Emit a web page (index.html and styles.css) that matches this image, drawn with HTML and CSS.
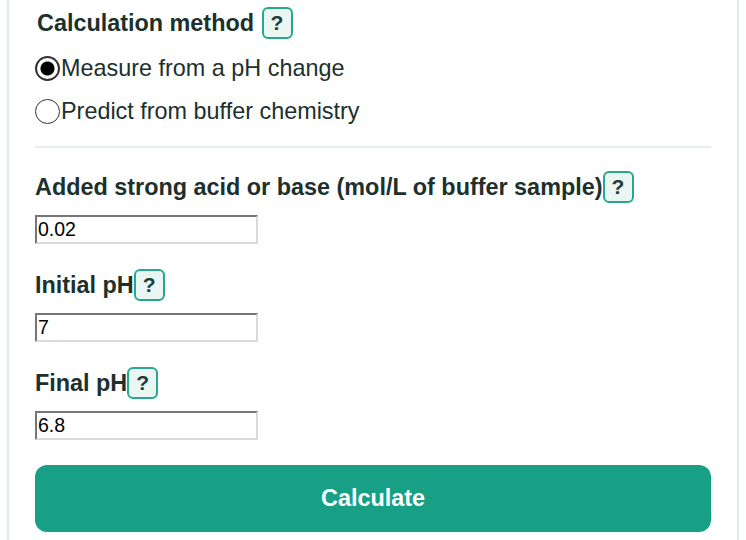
FILE: index.html
```html
<!DOCTYPE html>
<html lang="en">
<head>
  <meta charset="UTF-8" />
  <meta name="viewport" content="width=device-width, initial-scale=1.0" />
  <title>Buffer Capacity Calculator</title>
  <link rel="stylesheet" href="styles.css">
</head>
<body>
  <form class="card" onsubmit="return false;">
    <div class="field-label heading">Calculation method <button type="button" class="help">?</button></div>

    <div class="radio-group">
      <label class="radio-row">
        <input type="radio" name="method" value="measure" checked>
        <span>Measure from a pH change</span>
      </label>
      <label class="radio-row">
        <input type="radio" name="method" value="predict">
        <span>Predict from buffer chemistry</span>
      </label>
    </div>

    <hr class="divider">

    <div class="field">
      <div class="field-label">Added strong acid or base (mol/L of buffer sample)<button type="button" class="help">?</button></div>
      <input type="text" class="num-input" value="0.02">
    </div>

    <div class="field">
      <div class="field-label">Initial pH<button type="button" class="help">?</button></div>
      <input type="text" class="num-input" value="7">
    </div>

    <div class="field">
      <div class="field-label">Final pH<button type="button" class="help">?</button></div>
      <input type="text" class="num-input" value="6.8">
    </div>

    <button type="submit" class="btn-calc">Calculate</button>
  </form>
</body>
</html>
```

FILE: styles.css
```css
* {
  margin: 0;
  padding: 0;
  box-sizing: border-box;
}

body {
  font-family: 'Liberation Sans', Arial, Helvetica, sans-serif;
  background: #ffffff;
  color: #1c302c;
  margin: 0 7px;
}

.card {
  border: 2px solid #e2eae8;
  border-top: none;
  padding: 7px 26px 40px;
  min-height: 560px;
}

/* Labels */
.field-label {
  display: flex;
  align-items: center;
  height: 32px;
  font-size: 23.4px;
  font-weight: bold;
  white-space: pre;
}

.heading {
  padding-left: 2px;
}

.help {
  width: 31px;
  height: 32px;
  border: 2px solid #28a78d;
  border-radius: 6px;
  background: #e9f6f2;
  color: #1a3f3a;
  font-family: 'Liberation Sans', Arial, sans-serif;
  font-size: 21px;
  font-weight: bold;
  cursor: pointer;
}

.heading .help {
  margin-left: 1px;
}

/* Radios */
.radio-group {
  margin-top: 16px;
  display: flex;
  flex-direction: column;
  gap: 17px;
}

.radio-row {
  display: flex;
  align-items: center;
  height: 26px;
  font-size: 23.4px;
  cursor: pointer;
}

.radio-row input {
  appearance: none;
  -webkit-appearance: none;
  width: 25px;
  height: 25px;
  margin-right: 1px;
  border: 1.5px solid #333;
  border-radius: 50%;
  background: #fff;
  flex-shrink: 0;
}

.radio-row input:checked {
  border-width: 2px;
  background: radial-gradient(circle, #000 0, #000 6.5px, #fff 7.5px);
}

.divider {
  border: none;
  border-top: 2px solid #e6eeec;
  margin-top: 22px;
}

/* Fields */
.field {
  margin-top: 23px;
}

.field + .field {
  margin-top: 25px;
}

.num-input {
  display: block;
  margin-top: 12px;
  width: 223px;
  height: 29px;
  padding: 0 1px;
  border: 2px solid;
  border-color: #767676 #dadada #dadada #767676;
  font-family: 'Liberation Sans', Arial, sans-serif;
  font-size: 19.5px;
  color: #000;
  background: #fff;
  outline: none;
}

.btn-calc {
  display: block;
  width: 100%;
  height: 67px;
  margin-top: 25px;
  border: none;
  border-radius: 12px;
  background: #17a086;
  color: #ffffff;
  font-family: 'Liberation Sans', Arial, sans-serif;
  font-size: 23.4px;
  font-weight: bold;
  cursor: pointer;
}

.btn-calc:hover {
  background: #138d76;
}
```
